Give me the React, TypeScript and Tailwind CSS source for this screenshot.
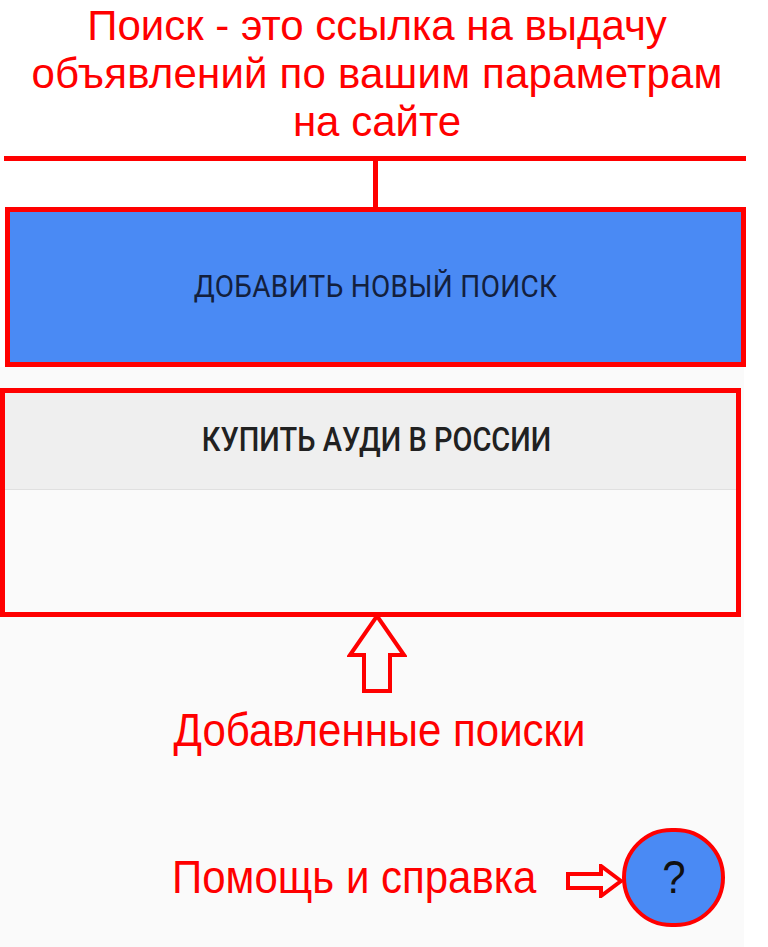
import React from "react";

const UpArrow = () => (
    <svg width="60" height="80" viewBox="0 0 60 80" className="block">
        <path
            d="M30 2 L57 41 L43 41 L43 77 L17 77 L17 41 L3 41 Z"
            fill="none"
            stroke="#ff0000"
            strokeWidth="4"
            strokeLinejoin="miter"
        />
    </svg>
);

const RightArrow = () => (
    <svg width="58" height="34" viewBox="0 0 58 34" className="block">
        <path
            d="M56 17 L36 2 L36 10 L3 10 L3 24 L36 24 L36 32 Z"
            fill="none"
            stroke="#ff0000"
            strokeWidth="4"
        />
    </svg>
);

const App = () => {
    return (
        <div className="w-[768px] h-[947px] bg-white overflow-hidden font-['Liberation_Sans',Arial,sans-serif]">
            {/* Title */}
            <div className="h-[156px] pt-[2px] pr-[14px] text-center text-[#ff0000] text-[42px] leading-[48px]">
                <p>Поиск - это ссылка на выдачу</p>
                <p className="tracking-[0.2px]">объявлений по вашим параметрам</p>
                <p>на сайте</p>
            </div>

            {/* Connector */}
            <div className="ml-[4px] w-[742px] h-[5px] bg-[#ff0000]" />
            <div className="ml-[373px] w-[5px] h-[46px] bg-[#ff0000]" />

            {/* Add button */}
            <div className="ml-[5px] w-[741px] h-[160px] border-[5px] border-[#ff0000] bg-[#4a8af4] flex items-center justify-center">
                <span className="inline-block scale-y-[1.15] font-['Roboto',sans-serif] text-[28px] tracking-[0.3px] text-[#13203d]">
                    ДОБАВИТЬ НОВЫЙ ПОИСК
                </span>
            </div>

            {/* App body */}
            <div className="w-[744px] h-[580px] bg-[#fafafa] pt-[21px]">
                <div className="w-[741px] h-[229px] border-[5px] border-[#ff0000] flex flex-col">
                    <div className="h-[97px] pl-[12px] bg-[#efefef] border-b border-[#e0e0e0] flex items-center justify-center">
                        <span className="inline-block scale-y-[1.12] font-['Roboto',sans-serif] font-medium text-[29px] text-[#212121]">
                            КУПИТЬ АУДИ В РОССИИ
                        </span>
                    </div>
                    <div className="flex-1 bg-[#fafafa]" />
                </div>

                <div className="ml-[347px] -mt-[3px]">
                    <UpArrow />
                </div>

                <p className="mt-[14px] pl-[15px] text-center text-[#ff0000] text-[42px] leading-[46px] scale-y-[1.1]">
                    Добавленные поиски
                </p>

                <div className="mt-[74px] flex items-center">
                    <span className="ml-[172px] inline-block scale-y-[1.1] text-[#ff0000] text-[42px] leading-[46px]">
                        Помощь и справка
                    </span>
                    <div className="ml-[29px] mt-[6px]">
                        <RightArrow />
                    </div>
                    <div className="-ml-[1px] w-[103px] h-[99px] rounded-full border-[4px] border-[#ff0000] bg-[#4a8af4] flex items-center justify-center">
                        <span className="inline-block scale-y-[1.1] text-[42px] text-[#111]">?</span>
                    </div>
                </div>
            </div>
        </div>
    );
};

export default App;
